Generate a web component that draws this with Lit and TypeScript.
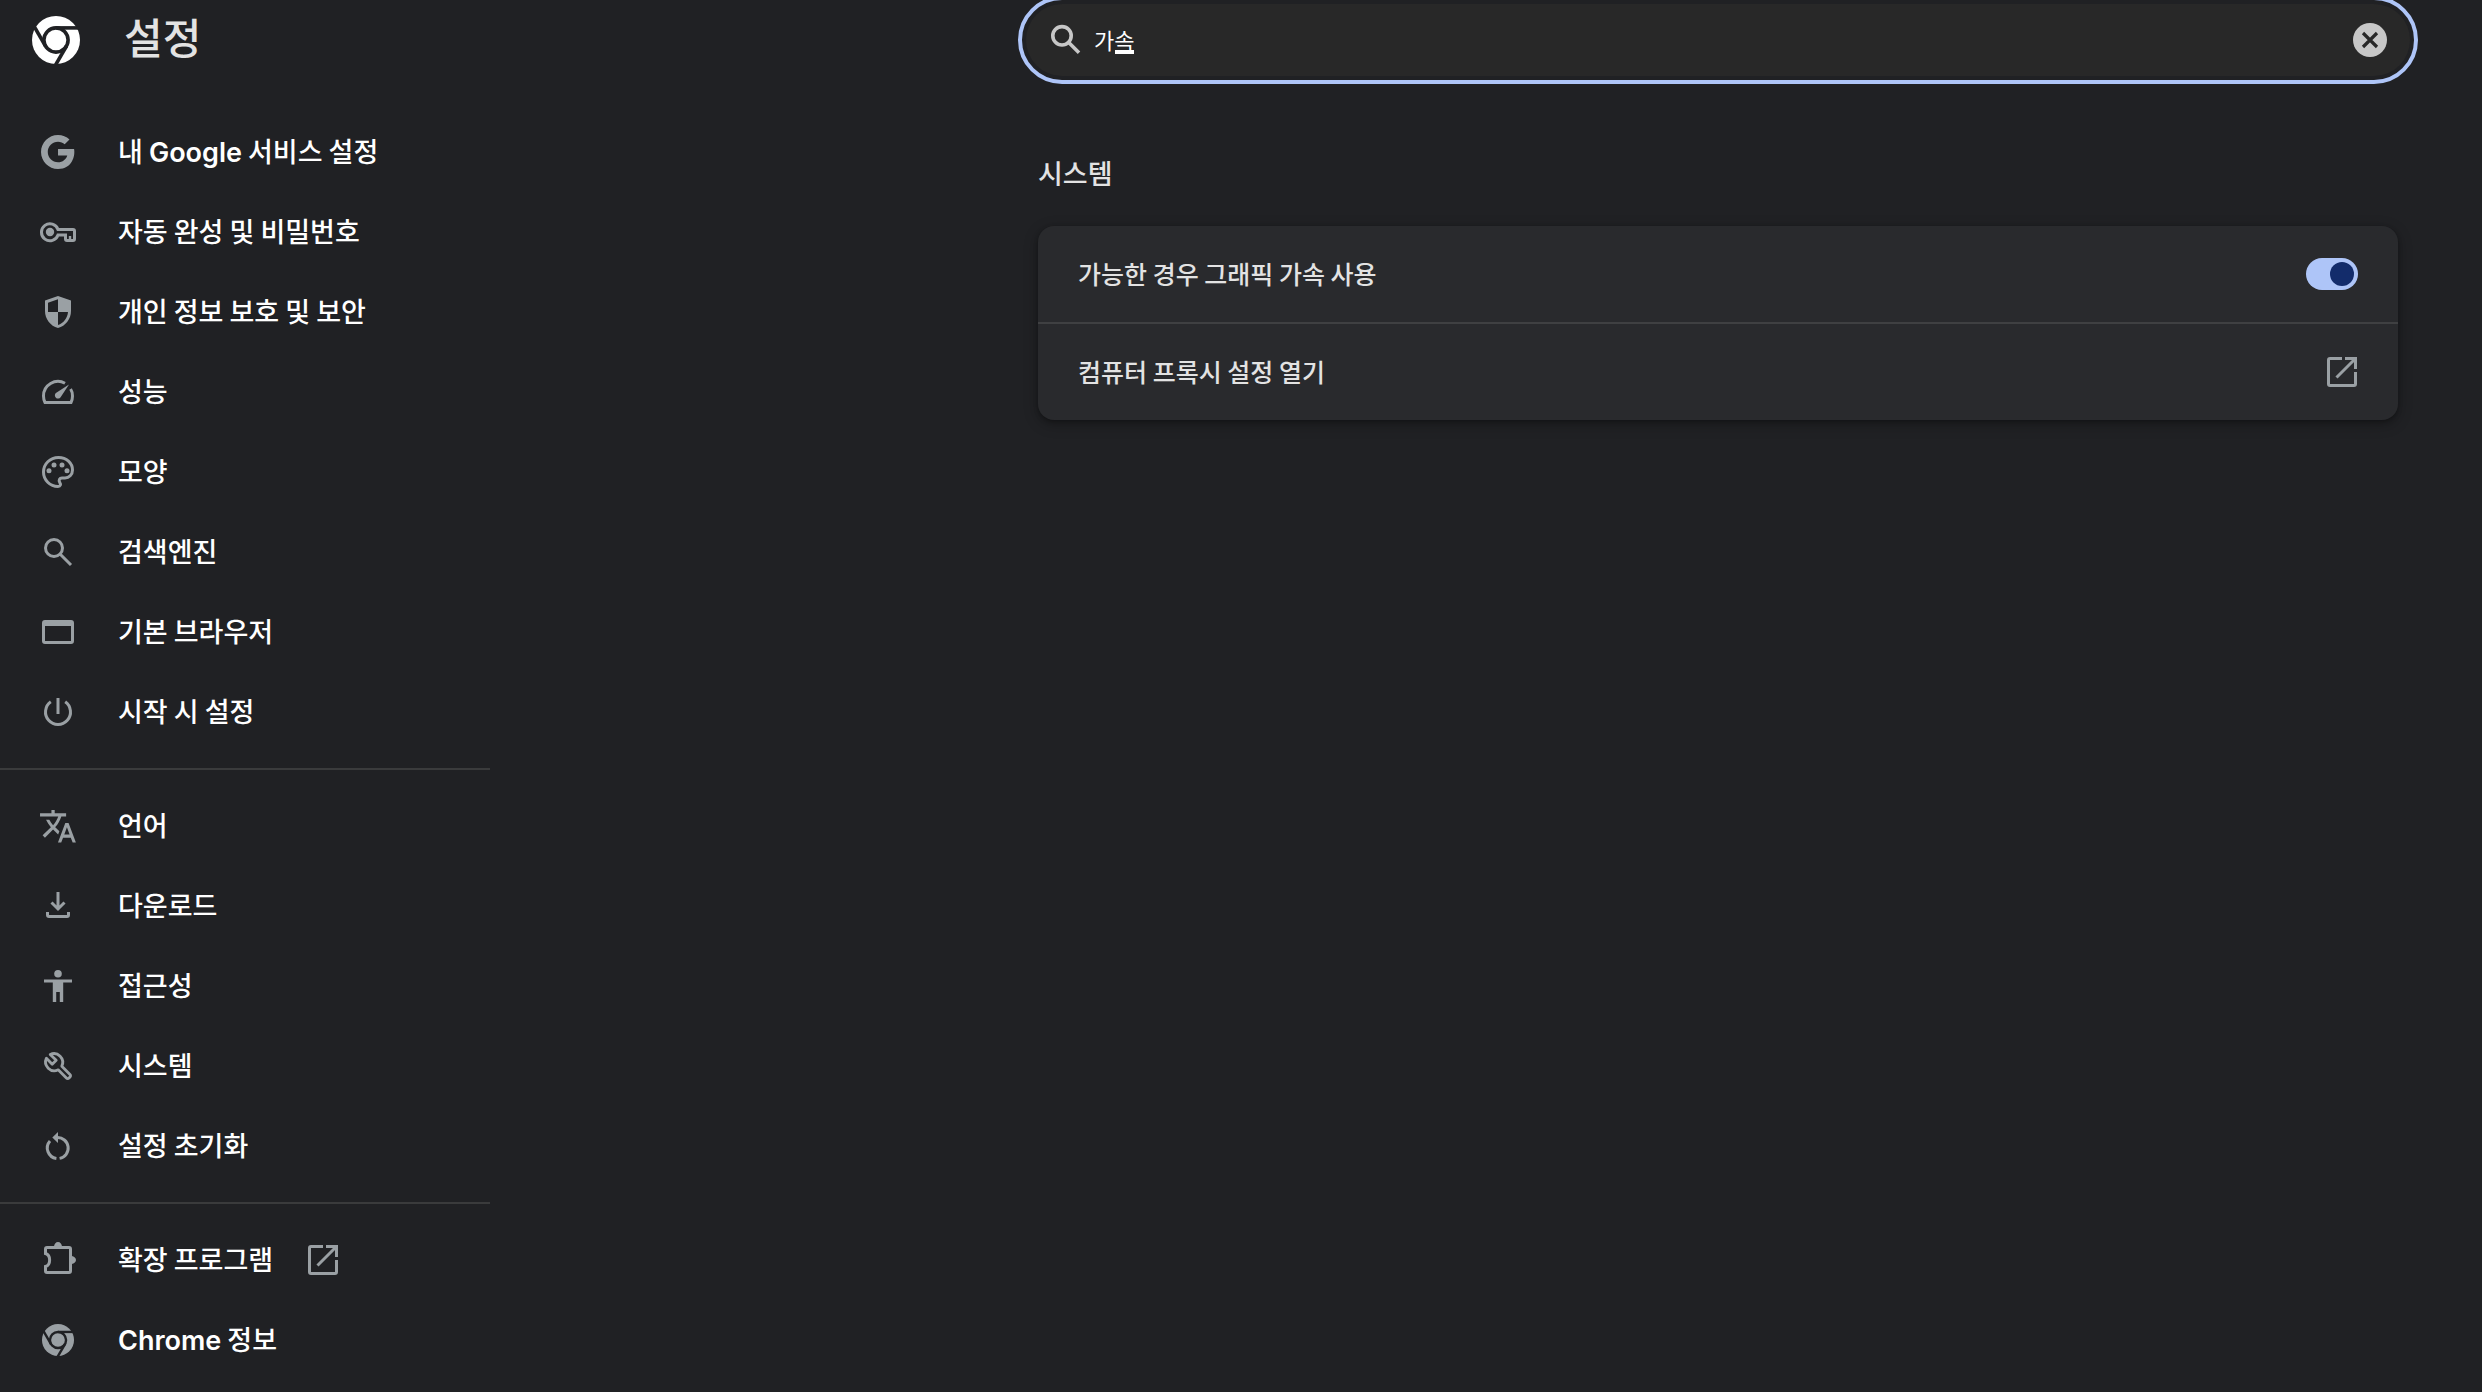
import { LitElement, html, css, svg, nothing } from "lit";
import type { SVGTemplateResult } from "lit";
import { customElement, state } from "lit/decorators.js";

const chromeMark = (scale: number, offset: number): SVGTemplateResult => svg`
  <g transform="translate(${offset} ${offset}) scale(${scale})">
    <circle cx="24" cy="24" r="24" fill="currentColor" stroke="none" />
    <g fill="none" stroke="var(--page)" stroke-width="3.6">
      <circle cx="24" cy="24" r="12.1" />
      <path d="M24 11.9H49" />
      <path d="M24 11.9H49" transform="rotate(120 24 24)" />
      <path d="M24 11.9H49" transform="rotate(240 24 24)" />
    </g>
  </g>`;

const icons: Record<string, SVGTemplateResult> = {
  google: svg`<path fill="currentColor" stroke="none" transform="translate(-1.3 -0.4) scale(1.7)"
    d="M12.545 10.239v3.821h5.445c-.712 2.315-2.647 3.972-5.445 3.972-3.332 0-6.033-2.701-6.033-6.032s2.701-6.032 6.033-6.032c1.498 0 2.866.549 3.921 1.453l2.814-2.814C17.503 2.988 15.139 2 12.545 2 7.021 2 2.543 6.477 2.543 12s4.478 10 10.002 10c8.396 0 10.249-7.85 9.426-11.748z"/>`,
  key: svg`<path d="M20 17.5H35a1.5 1.5 0 0 1 1.5 1.5v8a1.5 1.5 0 0 1-1.5 1.5h-6a1.5 1.5 0 0 1-1.5-1.5v-4H20A8.5 8.5 0 1 1 20 17.5z"/>
    <circle cx="12" cy="20" r="4.2" fill="currentColor" stroke="none"/><path d="M32 24v4" stroke-width="2.4"/>`,
  shield: svg`<path fill="currentColor" stroke="none" fill-rule="evenodd"
    d="M20 4 33 8.6V19c0 8-5.4 15-13 17C12.400 34 7 27 7 19V8.600zM20 7.200 10 10.800V20H20zM20 20V33c5.600-1.800 9.500-7 10-13z"/>`,
  speed: svg`<path d="M27 11.200A14.500 14.500 0 0 0 5.500 24c0 2.500.5 4.500 1.500 6.500H33c1-2 1.500-4 1.500-6.500 0-2.600-.6-5-1.900-7"/>
    <path fill="currentColor" stroke="none" d="M31 12.500 22.600 25.200a3.200 3.200 0 1 1-4.700-4.300z"/>`,
  palette: svg`<path d="M20 34.500C12 34.500 5.500 28 5.500 20S12 5.500 20.500 5.500c8 0 14 5.500 14 12.500 0 4.800-3.500 8-7.500 8h-3c-2.600 0-3.500 2.500-2.300 4.300 1.300 2 1 4.200-1.700 4.200z"/>
    <g fill="currentColor" stroke="none"><circle cx="11" cy="18.700" r="2.500"/><circle cx="16" cy="13" r="2.500"/><circle cx="24" cy="13" r="2.500"/><circle cx="29" cy="18.700" r="2.500"/></g>`,
  search: svg`<circle cx="16" cy="16" r="8.500"/><path d="M22 22 33 33"/>`,
  browser: svg`<rect x="5.500" y="9.500" width="29" height="21" rx="1.500"/><path d="M5 12.500H35"/>`,
  power: svg`<path d="M20 6V22M12.800 9.800a12.500 12.500 0 1 0 14.400 0"/>`,
  translate: svg`<path fill="currentColor" stroke="none" transform="translate(.4 .7) scale(1.63)"
    d="M12.870 15.070l-2.540-2.510.03-.03c1.740-1.940 2.980-4.170 3.710-6.530H17V4h-7V2H8v2H1v1.990h11.170C11.500 7.920 10.440 9.750 9 11.350 8.070 10.320 7.300 9.190 6.690 8h-2c.73 1.630 1.730 3.170 2.980 4.560l-5.090 5.020L4 19l5-5 3.110 3.110.76-2.040zM18.500 10h-2L12 22h2l1.120-3h4.750L21 22h2l-4.500-12zm-2.620 7l1.620-4.330L19.120 17h-3.240z"/>`,
  download: svg`<path d="M20 6V23M13.500 16.500 20 23l6.500-6.500M9.500 26v3a1.500 1.500 0 0 0 1.500 1.500H29a1.500 1.500 0 0 0 1.500-1.500v-3"/>`,
  accessibility: svg`<g fill="currentColor" stroke="none"><circle cx="20" cy="7.700" r="3.800"/>
    <path d="M6 13.400H34v3H25.200V36h-3.400V26h-3.600V36h-3.400V16.400H6z"/></g>`,
  wrench: svg`<path stroke-width="2.800" stroke-linejoin="round"
    d="M12.200 8.400 18.200 14.200 14.200 18.200 8.400 12.200A8.800 8.800 0 0 0 20.200 23.800L28.400 32a1.800 1.800 0 0 0 2.600 0l1-1a1.800 1.800 0 0 0 0-2.600L23.800 20.200A8.800 8.800 0 0 0 12.200 8.400z"/>`,
  reset: svg`<path d="M19 11.600A10.500 10.500 0 0 1 21.600 32.400M18.400 32.400A10.500 10.500 0 0 1 12 15"/>
    <path fill="currentColor" stroke="none" d="M20 6v11l-5.700-5.500z"/>`,
  extension: svg`<path d="M7.500 13.500V9A1.500 1.500 0 0 1 9 7.500H31A1.500 1.500 0 0 1 32.500 9V31A1.500 1.500 0 0 1 31 32.500H9A1.500 1.500 0 0 1 7.500 31V26.500C13 25 13 15 7.500 13.500z"/>
    <path fill="currentColor" stroke="none" d="M16 7a4 5 0 0 1 8 0zM33 16a5 4 0 0 1 0 8z"/>`,
  chrome: chromeMark(2 / 3, 4),
  launch: svg`<path d="M20 6.500H8A1.500 1.500 0 0 0 6.500 8V32A1.500 1.500 0 0 0 8 33.500H32A1.500 1.500 0 0 0 33.500 32V20M23 6.500H33.500V17M33 7 14.500 25.500"/>`,
};

const icon = (name: string) => html`<svg class="icon" viewBox="0 0 40 40" fill="none" stroke="currentColor"
  stroke-width="3" aria-hidden="true">${icons[name]}</svg>`;

/* Sets Latin words in their own face while the spaces stay in the Korean one. */
const mixed = (label: string) =>
  label.split(/([A-Za-z]+)/).map((part) => (/^[A-Za-z]/.test(part) ? html`<span class="latin">${part}</span>` : part));

interface MenuItem {
  icon: string;
  label: string;
  external?: boolean;
}

const menu: MenuItem[][] = [
  [
    { icon: "google", label: "내 Google 서비스 설정" },
    { icon: "key", label: "자동 완성 및 비밀번호" },
    { icon: "shield", label: "개인 정보 보호 및 보안" },
    { icon: "speed", label: "성능" },
    { icon: "palette", label: "모양" },
    { icon: "search", label: "검색엔진" },
    { icon: "browser", label: "기본 브라우저" },
    { icon: "power", label: "시작 시 설정" },
  ],
  [
    { icon: "translate", label: "언어" },
    { icon: "download", label: "다운로드" },
    { icon: "accessibility", label: "접근성" },
    { icon: "wrench", label: "시스템" },
    { icon: "reset", label: "설정 초기화" },
  ],
  [
    { icon: "extension", label: "확장 프로그램", external: true },
    { icon: "chrome", label: "Chrome 정보" },
  ],
];

@customElement("app-root")
export class AppRoot extends LitElement {
  @state() private query = "가속";
  @state() private composing = true;
  @state() private acceleration = true;

  static styles = css`
    :host {
      --page: #202124;
      --card: #292a2d;
      --accent: #aec5f8;
      --text: #e3e3e3;
      --icon: #9aa0a4;
      --line: #3a3b3c;
      display: grid;
      grid-template-columns: minmax(490px, 1fr) minmax(0, 1384px) 72px;
      box-sizing: border-box;
      min-height: 100vh;
      background: var(--page);
      color: var(--text);
      font-family: "Noto Sans CJK KR", sans-serif;
    }
    * {
      box-sizing: border-box;
    }
    .icon {
      display: block;
      flex: none;
      width: 40px;
      height: 40px;
      color: var(--icon);
    }
    .brand {
      display: flex;
      align-items: center;
      gap: 44px;
      height: 80px;
      padding-left: 32px;
    }
    .logo {
      width: 48px;
      height: 48px;
      color: #fff;
    }
    h1 {
      margin: 0;
      padding-bottom: 8px;
      font-size: 42px;
      line-height: 60px;
      font-weight: 500;
    }
    nav {
      width: 490px;
      padding-top: 32px;
    }
    ul {
      margin: 0;
      padding: 0;
      list-style: none;
    }
    ul + ul {
      margin-top: 16px;
      padding-top: 16px;
      border-top: 2px solid var(--line);
    }
    .item {
      display: flex;
      align-items: center;
      gap: 40px;
      height: 80px;
      padding-left: 38px;
      color: #fff;
      font-size: 27px;
      font-weight: 500;
      line-height: 40px;
      text-decoration: none;
    }
    .latin {
      font-family: Inter, sans-serif;
      font-weight: 600;
      line-height: 1;
    }
    .item .icon:last-child {
      margin-left: -10px;
    }
    .label {
      padding-bottom: 2px;
    }
    .search {
      display: flex;
      align-items: center;
      height: 72px;
      margin-top: 4px;
      padding: 0 20px 0 20px;
      border-radius: 36px;
      background: #282828;
      color: #c7c7c7;
      outline: 4px solid var(--accent);
      outline-offset: 4px;
    }
    .search .icon {
      color: inherit;
    }
    .field {
      position: relative;
      flex: 1;
      margin-left: 8px;
    }
    .field input {
      display: block;
      width: 100%;
      height: 40px;
      padding: 0 0 2px;
      border: 0;
      outline: 0;
      background: none;
      color: #fff;
      font: 400 22px/38px "Noto Sans CJK KR", sans-serif;
    }
    .composition {
      position: absolute;
      left: 21px;
      bottom: 6px;
      width: 19px;
      height: 4px;
      background: #fff;
    }
    .clear {
      padding: 0;
      border: 0;
      background: none;
      color: inherit;
    }
    section {
      padding: 75px 12px 0;
    }
    h2 {
      margin: 0 0 31px;
      font-size: 27px;
      font-weight: 500;
      line-height: 44px;
    }
    .card {
      border-radius: 16px;
      background: var(--card);
      box-shadow: 0 2px 4px rgba(0, 0, 0, 0.3), 0 4px 12px 4px rgba(0, 0, 0, 0.15);
    }
    .row {
      display: flex;
      align-items: center;
      justify-content: space-between;
      height: 96px;
      padding: 0 40px;
      color: inherit;
      font-size: 25px;
      font-weight: 500;
      line-height: 40px;
      text-decoration: none;
    }
    .row + .row {
      height: 98px;
      padding-right: 36px;
      border-top: 2px solid #3f4042;
    }
    .toggle {
      appearance: none;
      display: flex;
      align-items: center;
      width: 52px;
      height: 32px;
      margin: 0;
      padding: 0 4px;
      border-radius: 16px;
      background: #5f6368;
    }
    .toggle::before {
      content: "";
      width: 24px;
      height: 24px;
      border-radius: 50%;
      background: #132c6b;
    }
    .toggle:checked {
      justify-content: flex-end;
      background: var(--accent);
    }
  `;

  private onInput(e: InputEvent) {
    this.query = (e.target as HTMLInputElement).value;
    this.composing = false;
  }

  private clear() {
    this.query = "";
    this.composing = false;
  }

  render() {
    return html`
      <aside>
        <header class="brand">
          <svg class="logo" viewBox="0 0 48 48" aria-hidden="true">${chromeMark(1, 0)}</svg>
          <h1>설정</h1>
        </header>
        <nav>
          ${menu.map(
            (group) => html`<ul>
              ${group.map(
                (item) => html`<li>
                  <a class="item" href="#">${icon(item.icon)}<span class="label">${mixed(item.label)}</span>${item.external ? icon("launch") : nothing}</a>
                </li>`
              )}
            </ul>`
          )}
        </nav>
      </aside>
      <main>
        <div class="search">
          <svg class="icon" viewBox="0 0 40 40" fill="none" stroke="currentColor" stroke-width="3.600" aria-hidden="true">
            <circle cx="16" cy="15.800" r="9.200" /><path d="M22.500 22.300 33 32.800" />
          </svg>
          <div class="field">
            <input type="text" aria-label="설정 검색" .value=${this.query} @input=${this.onInput} />
            ${this.composing ? html`<span class="composition"></span>` : nothing}
          </div>
          <button class="clear" type="button" aria-label="검색어 지우기" @click=${this.clear}>
            <svg class="icon" viewBox="0 0 40 40" aria-hidden="true">
              <circle cx="20" cy="20" r="17" fill="currentColor" />
              <path d="M13 13 27 27M27 13 13 27" fill="none" stroke="#282828" stroke-width="3.200" />
            </svg>
          </button>
        </div>
        <section>
          <h2>시스템</h2>
          <div class="card">
            <label class="row">
              <span class="label">가능한 경우 그래픽 가속 사용</span>
              <input
                class="toggle"
                type="checkbox"
                role="switch"
                .checked=${this.acceleration}
                @change=${(e: Event) => (this.acceleration = (e.target as HTMLInputElement).checked)}
              />
            </label>
            <a class="row" href="#"><span class="label">컴퓨터 프록시 설정 열기</span>${icon("launch")}</a>
          </div>
        </section>
      </main>
    `;
  }
}
